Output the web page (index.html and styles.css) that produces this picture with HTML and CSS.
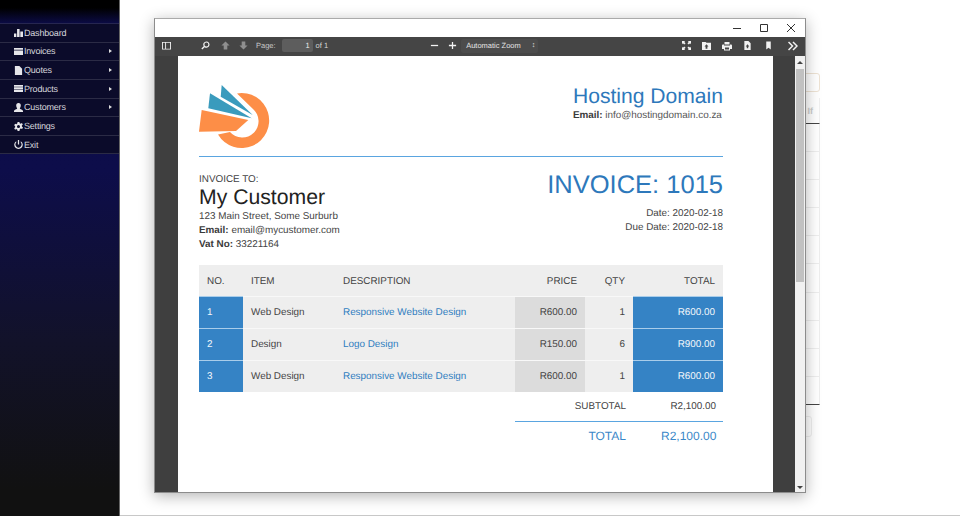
FILE: index.html
```html
<!DOCTYPE html>
<html lang="en">
<head>
<meta charset="utf-8">
<title>Invoice</title>
<link rel="stylesheet" href="styles.css">
</head>
<body>
<nav class="sidebar">
  <ul class="menu">
    <li class="menu-item"><svg class="mi" viewBox="0 0 10 10"><path d="M0 6h2.600v4H0zM3.400 1h2.800v9H3.400zM7 4h3v6H7z"/></svg>Dashboard</li>
    <li class="menu-item"><svg class="mi" viewBox="0 0 10 10"><path d="M0 1h10v2H0zM0 4h10v5H0z"/></svg>Invoices<span class="caret"></span></li>
    <li class="menu-item"><svg class="mi" viewBox="0 0 10 10"><path d="M1 0h5l3 3v7H1z"/></svg>Quotes<span class="caret"></span></li>
    <li class="menu-item"><svg class="mi" viewBox="0 0 10 10"><path d="M0 1h10v2H0zM0 3.700h10v2H0zM0 6.400h10v2.400H0z"/></svg>Products<span class="caret"></span></li>
    <li class="menu-item"><svg class="mi" viewBox="0 0 10 10"><path d="M5 0a2.500 2.500 0 0 1 2.500 3c0 1.500-1 2.500-1 3 0 1 3.500 1 3.500 3v1H0V9c0-2 3.500-2 3.500-3 0-.5-1-1.500-1-3A2.500 2.500 0 0 1 5 0z"/></svg>Customers<span class="caret"></span></li>
    <li class="menu-item"><svg class="mi" viewBox="0 0 10 10"><path fill-rule="evenodd" d="M4 0h2l.3 1.500 1.200.5L8.800 1.200l1 1.700-1.100 1 .1 1.200 1.200.9-1 1.700-1.400-.6-1 .8L6 10H4l-.3-1.500-1.200-.6-1.300.7-1-1.700 1.100-1V4.700L.2 3.700l1-1.700 1.400.6 1-.8zM5 3.300a1.700 1.700 0 1 0 0 3.400 1.700 1.700 0 0 0 0-3.400z"/></svg>Settings</li>
    <li class="menu-item"><svg class="mi" viewBox="0 0 10 10"><path d="M4.300 0h1.400v5H4.300zM2.500 1.300v1.600a3.300 3.300 0 1 0 5 0V1.300a4.700 4.700 0 1 1-5 0z"/></svg>Exit</li>
  </ul>
</nav>

<main class="backdrop">
  <div class="bg-input"></div>
  <div class="bg-head"><span class="bg-head-text">If</span></div>
  <div class="bg-row"></div><div class="bg-row"></div><div class="bg-row"></div><div class="bg-row"></div><div class="bg-row"></div>
  <div class="bg-row"></div><div class="bg-row"></div><div class="bg-row"></div><div class="bg-row"></div><div class="bg-row bg-row-last"></div>
  <div class="bg-btn"></div>
</main>

<section class="window">
  <header class="titlebar">
    <svg class="wc" viewBox="0 0 10 10"><path d="M1 5.500h8" /></svg>
    <svg class="wc" viewBox="0 0 10 10"><path d="M1.500 1.500h7v7h-7z"/></svg>
    <svg class="wc" viewBox="0 0 10 10"><path d="M1 1l8 8M9 1l-8 8"/></svg>
  </header>
  <div class="toolbar">
    <svg class="ti ti-side" viewBox="0 0 10 10"><path fill-rule="evenodd" d="M0 1h10v8.500H0zM1 2v6.500h2.500V2zM4.500 2v6.500H9V2z"/></svg>
    <svg class="ti ti-search" viewBox="0 0 10 10"><path fill-rule="evenodd" d="M6 .5a3.500 3.500 0 1 1-2 6.400L1.500 9.500.4 8.400 3 5.800A3.500 3.500 0 0 1 6 .5zm0 1.300a2.200 2.200 0 1 0 0 4.400 2.200 2.200 0 0 0 0-4.400z"/></svg>
    <svg class="ti ti-up dim" viewBox="0 0 10 10"><path d="M5 .5L9.500 5H7v4.500H3V5H.5z"/></svg>
    <svg class="ti ti-down dim" viewBox="0 0 10 10"><path d="M5 9.500L.5 5H3V.5h4V5h2.500z"/></svg>
    <span class="tb-label">Page:</span>
    <span class="tb-page">1</span>
    <span class="tb-of">of 1</span>
    <svg class="ti ti-minus" viewBox="0 0 10 10"><path d="M1 4.300h8v1.400H1z"/></svg>
    <svg class="ti ti-plus" viewBox="0 0 10 10"><path d="M4.300 1h1.400v3.300H9v1.400H5.700V9H4.300V5.700H1V4.300h3.300z"/></svg>
    <span class="tb-zoom">Automatic Zoom<span class="tb-updown">&#8597;</span></span>
    <svg class="ti ti-full" viewBox="0 0 10 10"><path d="M0 0h3.500L2.500 1 4 2.500 2.500 4 1 2.500 0 3.500zM10 0v3.500L9 2.500 7.500 4 6 2.500 7.500 1l-1-1zM0 10V6.500l1 1L2.500 6 4 7.500 2.500 9l1 1zM10 10H6.500l1-1L6 7.500 7.500 6 9 7.500l1-1z"/></svg>
    <svg class="ti ti-open" viewBox="0 0 10 10"><path d="M0 1h4l1 1h5v8H0zM5 3.500L2.800 6H4v2.500h2V6h1.200z" fill-rule="evenodd"/></svg>
    <svg class="ti ti-print" viewBox="0 0 10 10"><path fill-rule="evenodd" d="M2.500 1h5v2.500h-5zM0 4.500C0 4 .5 3.500 1 3.500h1v1h6v-1h1c.5 0 1 .5 1 1V8H8v1.500H2V8H0zM3 6.500V8.500h4v-2z"/></svg>
    <svg class="ti ti-save" viewBox="0 0 10 10"><path fill-rule="evenodd" d="M1.500 0H6l2.500 2.500V10h-7zM5 3.500L3 6h1.200v2h1.600V6H7z"/></svg>
    <svg class="ti ti-mark" viewBox="0 0 10 10"><path d="M2.500 .5h5v9L5 7.500l-2.500 2z"/></svg>
    <svg class="ti ti-more" viewBox="0 0 10 10"><path d="M.5 1l4 4-4 4M5 1l4 4-4 4" fill="none" stroke="#f2f2f2" stroke-width="1.500"/></svg>
  </div>
  <div class="viewer">
    <article class="page">
      <div class="inv-top">
        <svg class="logo" viewBox="0 0 72 66">
          <path d="M38 8.400A27.500 27.500 0 1 1 19 49.500L31 47A16.300 16.300 0 1 0 54 24z" fill="#fd8e47"/>
          <path d="M2.700 25L49.300 35 37 46 0 46.700z" fill="#fd8e47"/>
          <path d="M11 8.300L52.700 33.300 9.300 23.300z" fill="#3a9bbd"/>
          <path d="M22.700 0L53.700 30 21.700 11.700z" fill="#3a9bbd"/>
        </svg>
        <div class="company">
          <h1 class="company-name">Hosting Domain</h1>
          <p class="company-mail"><b>Email:</b> info@hostingdomain.co.za</p>
        </div>
      </div>
      <div class="inv-meta">
        <div class="to">
          <p class="to-label">INVOICE TO:</p>
          <h2 class="to-name">My Customer</h2>
          <p class="to-line">123 Main Street, Some Surburb</p>
          <p class="to-line"><b>Email:</b> email@mycustomer.com</p>
          <p class="to-line"><b>Vat No:</b> 33221164</p>
        </div>
        <div class="meta">
          <h2 class="inv-no">INVOICE: 1015</h2>
          <p class="meta-line">Date: 2020-02-18</p>
          <p class="meta-line">Due Date: 2020-02-18</p>
        </div>
      </div>
      <table class="items">
        <thead>
          <tr><th class="c-no">NO.</th><th class="c-item">ITEM</th><th class="c-desc">DESCRIPTION</th><th class="c-price r">PRICE</th><th class="c-qty r">QTY</th><th class="c-total r">TOTAL</th></tr>
        </thead>
        <tbody>
          <tr><td class="c-no cell-blue">1</td><td class="c-item">Web Design</td><td class="c-desc link">Responsive Website Design</td><td class="c-price r cell-grey">R600.00</td><td class="c-qty r">1</td><td class="c-total r cell-blue">R600.00</td></tr>
          <tr><td class="c-no cell-blue">2</td><td class="c-item">Design</td><td class="c-desc link">Logo Design</td><td class="c-price r cell-grey">R150.00</td><td class="c-qty r">6</td><td class="c-total r cell-blue">R900.00</td></tr>
          <tr><td class="c-no cell-blue">3</td><td class="c-item">Web Design</td><td class="c-desc link">Responsive Website Design</td><td class="c-price r cell-grey">R600.00</td><td class="c-qty r">1</td><td class="c-total r cell-blue">R600.00</td></tr>
        </tbody>
      </table>
      <div class="sums">
        <div class="sum-row"><span class="sum-label">SUBTOTAL</span><span class="sum-val">R2,100.00</span></div>
        <div class="sum-row sum-grand"><span class="sum-label">TOTAL</span><span class="sum-val">R2,100.00</span></div>
      </div>
    </article>
    <div class="scrollbar">
      <span class="arrow-up"></span>
      <span class="thumb"></span>
      <span class="arrow-down"></span>
    </div>
  </div>
</section>
</body>
</html>
```
FILE: styles.css
```css
* { box-sizing: border-box; }
html, body { margin: 0; height: 100%; overflow: hidden; }
body {
  display: flex;
  height: 516px;
  background: #fff;
  font-family: "Liberation Sans", Arial, sans-serif;
  color: #444;
  text-rendering: geometricPrecision;
}
p, h1, h2, ul { margin: 0; padding: 0; font-weight: normal; }

/* sidebar */
.sidebar {
  width: 120px;
  flex: none;
  padding-top: 23px;
  background: linear-gradient(#000 0, #000 8px, #0c0c48 24px, #0d0d4a 170px, #12122a 340px, #111 490px);
  border-right: 1px solid #666;
}
.menu { list-style: none; background: #0b0b2a; border-top: 1px solid #262650; }
.menu-item {
  display: flex;
  align-items: center;
  height: 18.65px;
  padding-left: 14px;
  padding-right: 7px;
  font-size: 9px;
  letter-spacing: -.2px;
  color: #d6d6dc;
  border-bottom: 1px solid #2b2b45;
}
.mi { width: 9px; height: 9px; margin-right: 1px; fill: #e6e6ea; flex: none; }
.caret {
  margin-left: auto;
  border-left: 3px solid #ddd;
  border-top: 2.500px solid transparent;
  border-bottom: 2.500px solid transparent;
}

/* faded page behind the window */
.backdrop { flex: 1; height: 516px; padding: 73px 140px 0 640px; border-bottom: 1px solid #c8c8c8; }
.bg-input { height: 19px; border: 1px solid #eee3d4; border-radius: 3px; }
.bg-head {
  display: flex;
  justify-content: flex-end;
  align-items: center;
  height: 26px;
  margin-top: 6px;
  padding-right: 6px;
  border-right: 1px solid #f0f0f0;
  border-bottom: 1px solid #444;
}
.bg-head-text { font-size: 9px; font-weight: bold; color: #ccc; }
.bg-row { height: 28.1px; border-right: 1px solid #eee; border-bottom: 1px solid #eee; }
.bg-row-last { border-bottom: 1px solid #444; }
.bg-btn { width: 52px; height: 21px; margin-top: 11px; border: 1px solid #eee; border-radius: 3px; }

/* pdf window */
.window {
  position: absolute;
  left: 154px;
  top: 18px;
  width: 652px;
  height: 475px;
  display: flex;
  flex-direction: column;
  background: #fff;
  border: 1px solid #8c8c8c;
  border-top-color: #aaa;
  box-shadow: 0 3px 14px rgba(0, 0, 0, .3);
}
.titlebar {
  display: flex;
  justify-content: flex-end;
  align-items: center;
  gap: 17px;
  height: 18px;
  padding-right: 9px;
  flex: none;
  background: #fff;
}
.wc { width: 10px; height: 10px; fill: none; stroke: #333; stroke-width: 1; }

.toolbar {
  display: flex;
  align-items: center;
  height: 19px;
  flex: none;
  padding-left: 7px;
  padding-bottom: 2px;
  background: #454545;
  color: #d9d9d9;
  font-size: 7.500px;
}
.ti { width: 9px; height: 9px; fill: #f2f2f2; flex: none; }
.dim { fill: #8f8f8f; }
.ti-search { margin-left: 30px; }
.ti-up { margin-left: 11px; }
.ti-down { margin-left: 9px; }
.tb-label { margin-left: 8px; color: #c8c8c8; }
.tb-page {
  width: 31px;
  height: 13px;
  margin-left: 6px;
  padding-right: 3px;
  line-height: 13px;
  text-align: right;
  background: #5d5d5d;
  color: #eee;
  border-radius: 2px;
}
.tb-of { margin-left: 3px; }
.ti-minus { margin-left: 102px; }
.ti-plus { margin-left: 9px; }
.tb-zoom {
  display: flex;
  justify-content: space-between;
  align-items: center;
  width: 77px;
  height: 14px;
  margin-left: 4px;
  padding: 0 3px 0 5px;
  background: #4c4c4c;
  border-radius: 2px;
  color: #e4e4e4;
}
.tb-updown { font-size: 7px; }
.ti-full { margin-left: 144px; }
.ti-open { margin-left: 11px; }
.ti-print { margin-left: 11px; width: 10px; height: 10px; }
.ti-save { margin-left: 11px; }
.ti-mark { margin-left: 12px; }
.ti-more { margin-left: 15px; width: 10px; height: 10px; }

.viewer {
  flex: 1;
  min-height: 0;
  display: flex;
  justify-content: space-between;
  padding-left: 23px;
  background: #3f3f3f;
}
.page {
  width: 595px;
  padding: 29px 50px 0 21px;
  background: #fff;
}

.inv-top { display: flex; justify-content: space-between; height: 72px; border-bottom: 1px solid #5aa5e0; }
.logo { width: 72px; height: 66px; }
.company-name { font-size: 21.100px; line-height: 23px; color: #2d78bb; }
.company-mail { font-size: 9.900px; line-height: 14px; margin-top: 1px; color: #555; }
.company-mail b, .to-line b { color: #3a3a3a; }

.inv-meta { display: flex; justify-content: space-between; margin-top: 14px; height: 94px; }
.to-label { font-size: 9.900px; line-height: 13px; margin-top: 2px; color: #444; }
.to-name { font-size: 21.200px; line-height: 25px; margin-top: -1px; color: #222; }
.to-line { font-size: 9.900px; line-height: 14px; color: #444; }
.meta { text-align: right; }
.inv-no { font-size: 25.500px; line-height: 28px; color: #2d78bb; margin-bottom: 8px; }
.meta-line { font-size: 9.900px; line-height: 14px; color: #444; }

.items { width: 524px; border-collapse: collapse; table-layout: fixed; font-size: 9.900px; }
.items th { height: 31px; padding: 2px 8px 0; font-weight: normal; text-align: left; background: #eee; color: #444; }
.items td { height: 32px; padding: 0 8px; background: #eee; color: #444; border-top: 1px solid #f8f8f8; }
.c-no { width: 44px; }
.c-item { width: 92px; }
.c-desc { width: 180px; }
.c-price { width: 70px; }
.c-qty { width: 48px; }
.c-total { width: 90px; }
.items .r { text-align: right; }
.items .link { color: #2f7dc0; }
.items .cell-blue { background: #3583c5; color: #f2f6fa; border-top-color: #a9cdea; }
.items .cell-grey { background: #dcdcdc; }

.sums { margin-left: 316px; font-size: 9.900px; color: #444; }
.sum-row { display: flex; justify-content: flex-end; align-items: center; height: 29px; padding-right: 7px; }
.sum-label { margin-right: 35px; }
.sum-val { width: 55px; text-align: right; white-space: nowrap; }
.sum-grand { height: 30px; padding-bottom: 2px; border-top: 1px solid #5aa5e0; font-size: 12px; color: #3a87c8; }

.scrollbar {
  display: flex;
  flex-direction: column;
  align-items: center;
  width: 10px;
  background: #f1f1f1;
  flex: none;
}
.arrow-up { margin-top: 5px; border: 3px solid transparent; border-top: 0; border-bottom: 3px solid #444; }
.thumb { width: 8px; height: 213px; margin-top: 5px; background: #c1c1c1; }
.arrow-down { margin-top: auto; margin-bottom: 3px; border: 3px solid transparent; border-bottom: 0; border-top: 3px solid #444; }
```
